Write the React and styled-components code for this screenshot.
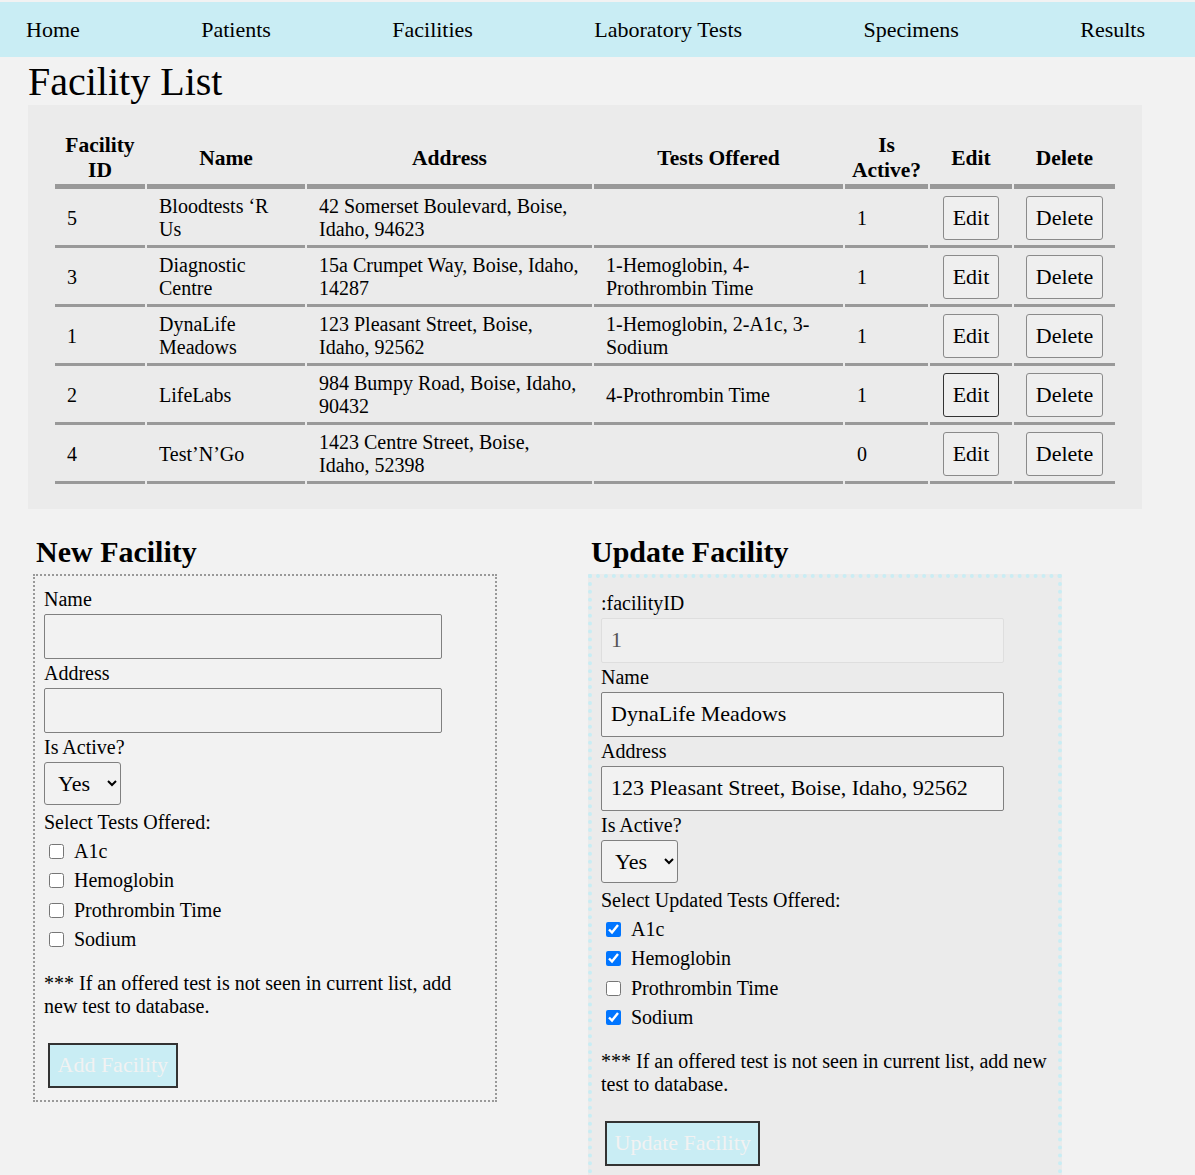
import React from 'react';
import styled, { createGlobalStyle } from 'styled-components';

const GlobalStyle = createGlobalStyle`
  html, body {
    margin: 0;
    padding: 0;
    background: #f2f2f2;
  }
  body {
    font-family: "Liberation Serif", "Times New Roman", serif;
    color: #000;
  }
`;

const Page = styled.div`
  padding-top: 2px;
  font-family: "Liberation Serif", "Times New Roman", serif;
  font-size: 20px;
  color: #000;
`;

const Nav = styled.nav`
  display: flex;
  align-items: center;
  justify-content: space-between;
  box-sizing: border-box;
  height: 55px;
  padding: 0 50px 0 26px;
  background: #c9edf4;
`;

const NavLink = styled.a`
  font-size: 22px;
  color: #000;
  text-decoration: none;
`;

const Main = styled.main`
  padding: 0 53px 0 28px;
`;

const Title = styled.h1`
  margin: 2px 0 0;
  font-size: 40px;
  font-weight: normal;
  line-height: 46px;
`;

const TablePanel = styled.div`
  background: #ebebeb;
  padding: 25px 25px 23px;
`;

const Table = styled.table`
  width: 100%;
  table-layout: fixed;
  border-collapse: separate;
  border-spacing: 2px;
`;

const Th = styled.th`
  box-sizing: border-box;
  font-size: 21.5px;
  font-weight: bold;
  line-height: 25px;
  padding: 1px 6px;
  border-bottom: 5px solid #999;
  text-align: center;
  vertical-align: middle;
`;

const Td = styled.td`
  box-sizing: border-box;
  font-size: 20px;
  line-height: 23px;
  padding: ${(p) => (p.$action ? '4px 0' : '4px 12px')};
  border-bottom: 3px solid #999;
  text-align: ${(p) => (p.$action ? 'center' : 'left')};
  vertical-align: middle;
`;

const ActionButton = styled.button`
  height: 44px;
  padding: 0 8.5px;
  font-family: "Liberation Serif", "Times New Roman", serif;
  font-size: 22px;
  color: #000;
  background: #efefef;
  border: 1px solid ${(p) => (p.$active ? '#333' : '#8a8a8a')};
  border-radius: 3px;
  vertical-align: middle;
`;

const Forms = styled.section`
  display: grid;
  grid-template-columns: 555px 1fr;
  align-items: start;
  margin-left: 5px;
`;

const FormColumn = styled.div`
  display: flex;
  flex-direction: column;
  align-items: flex-start;
`;

const FormTitle = styled.h2`
  margin: 26px 0 4px 3px;
  font-size: 30px;
  font-weight: bold;
  line-height: 34.5px;
`;

const FormBox = styled.form`
  box-sizing: border-box;
  width: ${(p) => (p.$update ? '474px' : '464px')};
  padding: ${(p) => (p.$update ? '14px 9px 12px' : '12px 9px 12px')};
  border: ${(p) => (p.$update ? '4px dotted #c9edf4' : '2px dotted #999')};
  background: ${(p) => (p.$update ? '#ebebeb' : 'transparent')};
`;

const FieldLabel = styled.label`
  display: block;
  font-size: 20px;
  line-height: 23px;
`;

const TextInput = styled.input`
  display: block;
  box-sizing: border-box;
  width: 90%;
  height: 45px;
  margin: 3px 0;
  padding: 0 9px;
  font-family: "Liberation Serif", "Times New Roman", serif;
  font-size: 22px;
  color: ${(p) => (p.readOnly ? '#555' : '#000')};
  background: ${(p) => (p.readOnly ? '#efefef' : '#f2f2f2')};
  border: 1px solid ${(p) => (p.readOnly ? '#dedede' : '#808080')};
  border-radius: 2px;
  outline: none;
`;

const Select = styled.select`
  display: block;
  box-sizing: border-box;
  width: 77px;
  height: 43px;
  margin: 3px 0 6px;
  padding: 0 0 0 9px;
  font-family: "Liberation Serif", "Times New Roman", serif;
  font-size: 22px;
  color: #000;
  background-color: #f2f2f2;
  border: 1px solid #808080;
  border-radius: 3px;
`;

const CheckList = styled.div`
  margin-top: 3px;
`;

const CheckRow = styled.label`
  display: flex;
  align-items: center;
  height: 29.5px;
  font-size: 20px;
  line-height: 23px;
`;

const CheckBox = styled.input`
  width: 15px;
  height: 15px;
  margin: 0 10px 0 5px;
`;

const Note = styled.p`
  margin: 17px 0 0;
  font-size: 20px;
  line-height: 23px;
`;

const SubmitButton = styled.button`
  display: block;
  box-sizing: border-box;
  height: 45px;
  margin: 25px 0 0 4px;
  padding: 0 7.5px;
  font-family: "Liberation Serif", "Times New Roman", serif;
  font-size: 22px;
  color: #f2f2f2;
  background: #c9edf4;
  border: 2px solid #333;
`;

const navItems = ['Home', 'Patients', 'Facilities', 'Laboratory Tests', 'Specimens', 'Results'];

const columns = [
  { label: 'Facility ID', width: 90 },
  { label: 'Name', width: 158 },
  { label: 'Address', width: 285 },
  { label: 'Tests Offered', width: 249 },
  { label: 'Is Active?', width: 83 },
  { label: 'Edit', width: 82 },
  { label: 'Delete', width: 101 },
];

const facilities = [
  { id: 5, name: 'Bloodtests ‘R Us', address: '42 Somerset Boulevard, Boise, Idaho, 94623', tests: '', active: 1 },
  { id: 3, name: 'Diagnostic Centre', address: '15a Crumpet Way, Boise, Idaho, 14287', tests: '1-Hemoglobin, 4-Prothrombin Time', active: 1 },
  { id: 1, name: 'DynaLife Meadows', address: '123 Pleasant Street, Boise, Idaho, 92562', tests: '1-Hemoglobin, 2-A1c, 3-Sodium', active: 1 },
  { id: 2, name: 'LifeLabs', address: '984 Bumpy Road, Boise, Idaho, 90432', tests: '4-Prothrombin Time', active: 1, hover: true },
  { id: 4, name: 'Test’N’Go', address: '1423 Centre Street, Boise, Idaho, 52398', tests: '', active: 0 },
];

const testNames = ['A1c', 'Hemoglobin', 'Prothrombin Time', 'Sodium'];
const updateChecked = { A1c: true, Hemoglobin: true, 'Prothrombin Time': false, Sodium: true };

const noteText = '*** If an offered test is not seen in current list, add new test to database.';

function TestChecks({ checked }) {
  return (
    <CheckList>
      {testNames.map((t) => (
        <CheckRow key={t}>
          <CheckBox type="checkbox" defaultChecked={checked ? checked[t] : false} />
          {t}
        </CheckRow>
      ))}
    </CheckList>
  );
}

export default function App() {
  const stop = (e) => e.preventDefault();
  return (
    <Page>
      <GlobalStyle />
      <Nav>
        {navItems.map((n) => (
          <NavLink key={n} href="#">{n}</NavLink>
        ))}
      </Nav>
      <Main>
        <Title>Facility List</Title>
        <TablePanel>
          <Table>
            <colgroup>
              {columns.map((c) => (
                <col key={c.label} style={{ width: c.width }} />
              ))}
            </colgroup>
            <thead>
              <tr>
                {columns.map((c) => (
                  <Th key={c.label}>{c.label}</Th>
                ))}
              </tr>
            </thead>
            <tbody>
              {facilities.map((f) => (
                <tr key={f.id}>
                  <Td>{f.id}</Td>
                  <Td>{f.name}</Td>
                  <Td>{f.address}</Td>
                  <Td>{f.tests}</Td>
                  <Td>{f.active}</Td>
                  <Td $action>
                    <ActionButton $active={f.hover}>Edit</ActionButton>
                  </Td>
                  <Td $action>
                    <ActionButton>Delete</ActionButton>
                  </Td>
                </tr>
              ))}
            </tbody>
          </Table>
        </TablePanel>

        <Forms>
          <FormColumn>
            <FormTitle>New Facility</FormTitle>
            <FormBox onSubmit={stop}>
              <FieldLabel>Name</FieldLabel>
              <TextInput type="text" />
              <FieldLabel>Address</FieldLabel>
              <TextInput type="text" />
              <FieldLabel>Is Active?</FieldLabel>
              <Select defaultValue="1">
                <option value="1">Yes</option>
                <option value="0">No</option>
              </Select>
              <FieldLabel>Select Tests Offered:</FieldLabel>
              <TestChecks />
              <Note>{noteText}</Note>
              <SubmitButton type="submit">Add Facility</SubmitButton>
            </FormBox>
          </FormColumn>

          <FormColumn>
            <FormTitle>Update Facility</FormTitle>
            <FormBox $update onSubmit={stop}>
              <FieldLabel>:facilityID</FieldLabel>
              <TextInput type="text" readOnly value="1" />
              <FieldLabel>Name</FieldLabel>
              <TextInput type="text" defaultValue="DynaLife Meadows" />
              <FieldLabel>Address</FieldLabel>
              <TextInput type="text" defaultValue="123 Pleasant Street, Boise, Idaho, 92562" />
              <FieldLabel>Is Active?</FieldLabel>
              <Select defaultValue="1">
                <option value="1">Yes</option>
                <option value="0">No</option>
              </Select>
              <FieldLabel>Select Updated Tests Offered:</FieldLabel>
              <TestChecks checked={updateChecked} />
              <Note>{noteText}</Note>
              <SubmitButton type="submit">Update Facility</SubmitButton>
            </FormBox>
          </FormColumn>
        </Forms>
      </Main>
    </Page>
  );
}
